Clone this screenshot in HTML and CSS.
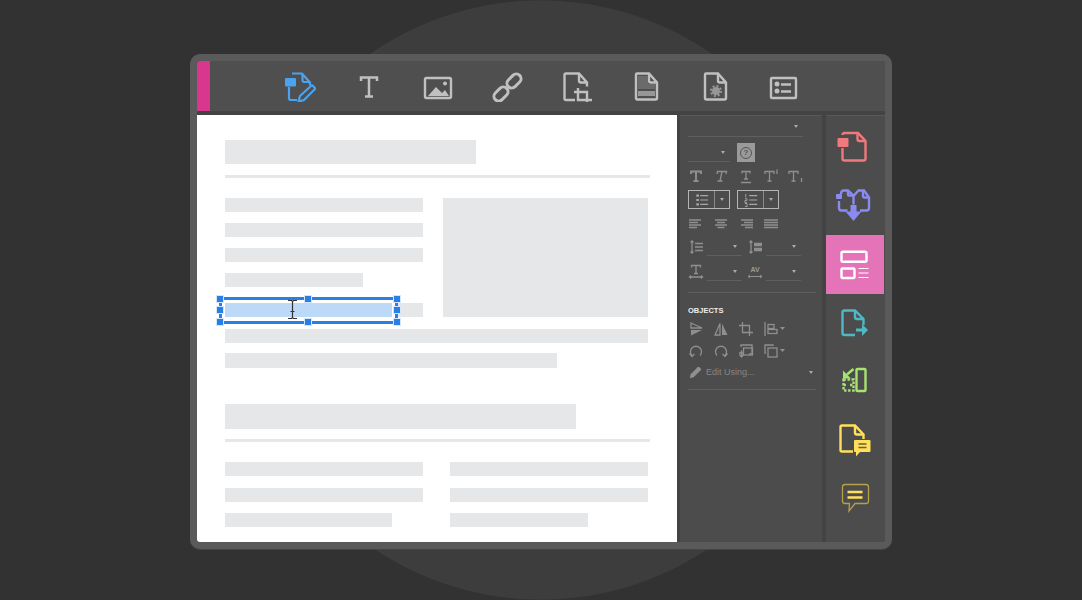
FILE: index.html
```html
<!DOCTYPE html>
<html lang="en">

<head>
    <meta charset="UTF-8">
    <title>Editor</title>
    <link rel="stylesheet" href="styles.css">
</head>

<body>
    <div class="window">
        <!-- top toolbar -->
        <div class="toolbar">
            <div class="accent"></div>
            <div class="tools">
                <svg class="tool tool-blue" viewBox="0 0 36 32">
                    <path d="M10 3.500h10l8 9v3M7 17v11q0 2 2 2h6"/>
                    <path d="M20.500 4v6q0 2 2 2h5" />
                    <rect class="solid" x="3" y="8" width="11" height="8.500" rx="1"/>
                    <path d="M16.500 31.500l1.500-5.500L29 16q1-1 2 0l1.500 1.500q1 1 0 2L22 30z"/>
                </svg>
                <svg class="tool" viewBox="0 0 36 32">
                    <path class="slab" d="M10 11V7.500h16V11M18 7.500V26M14 26.500h8"/>
                </svg>
                <svg class="tool" viewBox="0 0 36 32">
                    <rect x="5" y="8" width="26" height="20" rx="1.500"/>
                    <path class="solid" d="M8 26l8-9 6 6 3-3 4 6z"/>
                    <circle class="solid" cx="25" cy="13.500" r="2"/>
                </svg>
                <svg class="tool" viewBox="0 0 36 32">
                    <rect class="thick" x="-8" y="-4.750" width="16" height="9.500" rx="4.750" transform="translate(25 11) rotate(-45)"/>
                    <rect class="thick" x="-8" y="-4.750" width="16" height="9.500" rx="4.750" transform="translate(12 24) rotate(-45)"/>
                </svg>
                <svg class="tool" viewBox="0 0 36 32">
                    <path d="M17 30H8q-1.500 0-1.500-1.500V5q0-1.500 1.500-1.500h13l8 9v4M21 4v6.500q0 2 2 2h6"/>
                    <path d="M20 18v12h14M16 22h13v12"/>
                </svg>
                <svg class="tool" viewBox="0 0 36 32">
                    <path d="M10 3.500h12l8 9V28q0 1.500-1.500 1.500h-18Q9 29.500 9 28V5q0-1.500 1-1.500zM22 4v6.500q0 2 2 2h6"/>
                    <path class="dim" d="M11 6h10v8h7v5H11z"/>
                    <rect class="mid" x="11" y="21" width="17" height="5"/>
                </svg>
                <svg class="tool" viewBox="0 0 36 32">
                    <path d="M10 3.500h12l8 9V28q0 1.500-1.500 1.500h-18Q9 29.500 9 28V5q0-1.500 1-1.500zM22 4v6.500q0 2 2 2h6"/>
                    <circle class="mid" cx="20" cy="21" r="4"/>
                    <circle class="gear" cx="20" cy="21" r="5"/>
                </svg>
                <svg class="tool" viewBox="0 0 36 32">
                    <rect x="6" y="8" width="25" height="20" rx="1"/>
                    <circle class="solid" cx="12" cy="14" r="2.500"/>
                    <circle class="solid" cx="12" cy="21" r="2.500"/>
                    <path d="M16 14.500h10M16 21.500h10"/>
                </svg>
            </div>
        </div>

        <div class="workspace">
            <!-- page being edited -->
            <div class="doc">
                <div class="bar title title-a"></div>
                <div class="bar rule"></div>
                <div class="cols">
                    <div class="col col-left">
                        <div class="bar"></div>
                        <div class="bar"></div>
                        <div class="bar"></div>
                        <div class="bar short"></div>
                        <div class="bar selected">
                            <div class="highlight"></div>
                            <div class="frame">
                                <span class="handle h-tl"></span>
                                <span class="handle h-tm"></span>
                                <span class="handle h-tr"></span>
                                <span class="handle h-ml"></span>
                                <span class="handle h-mr"></span>
                                <span class="handle h-bl"></span>
                                <span class="handle h-bm"></span>
                                <span class="handle h-br"></span>
                            </div>
                            <svg class="ibeam" viewBox="0 0 9 19">
                                <path d="M0 .5h3.500l1 1 1-1H9M4.500 1.500v16M0 18.500h3.500l1-1 1 1H9M2.500 11.500h4"/>
                            </svg>
                        </div>
                    </div>
                    <div class="picture"></div>
                </div>
                <div class="bar wide line-a"></div>
                <div class="bar line-b"></div>
                <div class="bar title title-b"></div>
                <div class="bar rule"></div>
                <div class="cols cols-lower">
                    <div class="col">
                        <div class="bar"></div>
                        <div class="bar"></div>
                        <div class="bar short-a"></div>
                    </div>
                    <div class="col">
                        <div class="bar"></div>
                        <div class="bar"></div>
                        <div class="bar short"></div>
                    </div>
                </div>
            </div>

            <!-- properties panel -->
            <div class="panel">
                <div class="select select-full"><i class="caret"></i></div>
                <div class="row row-font">
                    <div class="select select-size"><i class="caret"></i></div>
                    <div class="help"><span>?</span></div>
                </div>
                <div class="row icons row-t">
                    <svg class="pi pi-bold" viewBox="0 0 16 16"><path d="M3 6V3.500h10V6M8 3.500V13M5.500 13h5"/></svg>
                    <svg class="pi" viewBox="0 0 16 16"><path d="M4 6l.5-2.500h9L13 6M9 3.500L7 13M4.500 13h5"/></svg>
                    <svg class="pi" viewBox="0 0 16 16"><path d="M4 5.500v-2h8v2M8 3.500V11M6 11h4M3 14.500h10"/></svg>
                    <svg class="pi" viewBox="0 0 16 16"><path d="M2 6V3.500h9V6M6.500 3.500V13M4.500 13h4M14 1.500V6"/></svg>
                    <svg class="pi" viewBox="0 0 16 16"><path d="M1 6V3.500h9V6M5.500 3.500V13M3.500 13h4M13.500 10v4"/></svg>
                </div>
                <div class="row row-lists">
                    <div class="split">
                        <svg class="pi" viewBox="0 0 16 16">
                            <path d="M6 3h9M6 8h9M6 13h9"/>
                            <path class="dots" d="M1.500 3h3M1.500 8h3M1.500 13h3"/>
                        </svg>
                        <div class="split-arrow"><i class="caret"></i></div>
                    </div>
                    <div class="split">
                        <svg class="pi" viewBox="0 0 16 16">
                            <path d="M6 3h9M6 8h9M6 13h9"/>
                            <path class="thin" d="M2 1v4M1 6.500h2.500v2H1V11h2.500M1 12h2.500v3.500H1"/>
                        </svg>
                        <div class="split-arrow"><i class="caret"></i></div>
                    </div>
                </div>
                <div class="row icons row-align">
                    <svg class="pi" viewBox="0 0 16 16"><path d="M1 4h12M1 6.500h9M1 9h12M1 11.500h8"/></svg>
                    <svg class="pi" viewBox="0 0 16 16"><path d="M2 4h12M4 6.500h8M2 9h12M4.500 11.500h7"/></svg>
                    <svg class="pi" viewBox="0 0 16 16"><path d="M3 4h12M6 6.500h9M3 9h12M7 11.500h8"/></svg>
                    <svg class="pi" viewBox="0 0 16 16"><path d="M1 4h14M1 6.500h14M1 9h14M1 11.500h14"/></svg>
                </div>
                <div class="row row-metric">
                    <svg class="pi" viewBox="0 0 16 16"><path d="M4 2v12M2.500 3.500L4 2l1.500 1.500M2.500 12.500L4 14l1.500-1.500M7 4.500h8M7 8h8M7 11.500h8"/></svg>
                    <div class="select select-small"><i class="caret"></i></div>
                    <svg class="pi pi-second" viewBox="0 0 16 16">
                        <path d="M4 2v12M2.500 3.500L4 2l1.500 1.500M2.500 12.500L4 14l1.500-1.500"/>
                        <path class="thick-bar" d="M7 5.500h8M7 10.500h8"/>
                    </svg>
                    <div class="select select-small"><i class="caret"></i></div>
                </div>
                <div class="row row-metric row-metric-b">
                    <svg class="pi" viewBox="0 0 16 16"><path d="M3.500 3.500V1.500h9v2M8 1.500v8M6 9.500h4M1.500 13h13M3 11.500L1.500 13 3 14.500M13 11.500l1.500 1.500-1.500 1.500"/></svg>
                    <div class="select select-small"><i class="caret"></i></div>
                    <div class="av pi-second">
                        <span>AV</span>
                        <svg class="av-arrow" viewBox="0 0 16 5"><path d="M1 2.500h14M3 1L1 2.500 3 4M13 1l2 1.500L13 4"/></svg>
                    </div>
                    <div class="select select-small"><i class="caret"></i></div>
                </div>
                <div class="divider divider-a"></div>
                <div class="heading">OBJECTS</div>
                <div class="row icons row-obj">
                    <svg class="pi" viewBox="0 0 16 16"><path d="M3 2l11 5H3z"/><path class="fill" d="M3 9h11L3 14.500z"/></svg>
                    <svg class="pi" viewBox="0 0 16 16"><path d="M7 2.500L2 14h5z"/><path class="fill" d="M9 2.500L14.500 14H9z"/></svg>
                    <svg class="pi" viewBox="0 0 16 16"><path d="M4.500 1v10.500H15M1 4.500h10.500V15"/></svg>
                    <svg class="pi" viewBox="0 0 16 16">
                        <path d="M2 1v14"/><rect x="5" y="3.500" width="6" height="4"/><rect x="5" y="8.500" width="9" height="4"/>
                        <path class="fill" d="M17 6h5l-2.500 3z"/>
                    </svg>
                </div>
                <div class="row icons row-obj row-obj-b">
                    <svg class="pi" viewBox="0 0 16 16"><path d="M4 12.500A5.500 5.500 0 1 1 12 12.500M1.500 10.500L4 13.500l2.500-2.500"/></svg>
                    <svg class="pi" viewBox="0 0 16 16"><path d="M12 12.500A5.500 5.500 0 1 0 4 12.500M14.500 10.500L12 13.500l-2.500-2.500"/></svg>
                    <svg class="pi" viewBox="0 0 16 16">
                        <path d="M3 4V2h11v9h-3"/><rect x="5.500" y="5" width="9" height="7"/>
                        <path d="M1 10h5M3.500 7.500V13M1.500 11.500l2 2.500 2-2.500"/>
                    </svg>
                    <svg class="pi" viewBox="0 0 16 16">
                        <path d="M10 3V2H2v8h1"/><rect x="5" y="5" width="9" height="9"/>
                        <path class="fill" d="M17 6h5l-2.500 3z"/>
                    </svg>
                </div>
                <div class="row row-edit">
                    <svg class="pi" viewBox="0 0 16 16"><path class="fill" d="M2 15l1-4.500L11 2.500q1-1 2 0l1.500 1.500q1 1 0 2L6.500 14z"/></svg>
                    <span class="edit-label">Edit Using...</span>
                    <i class="caret"></i>
                </div>
                <div class="divider divider-b"></div>
            </div>

            <!-- right side rail -->
            <div class="rail">
                <div class="rail-item tall">
                    <svg class="ri ri-red" viewBox="0 0 36 36">
                        <path d="M7.500 6q0-2 2-2H23l7.500 8v17.500q0 2-2 2h-19q-2 0-2-2V19"/>
                        <path d="M22.500 4.500V10q0 2 2 2h6"/>
                        <rect class="solid" x="2.500" y="9" width="11" height="9" rx="1"/>
                    </svg>
                </div>
                <div class="rail-item tall">
                    <svg class="ri ri-violet" viewBox="0 0 36 36">
                        <path d="M4 13v7q0 2.500 2.500 2.500h6M6 6q0-3.500 3-3.500h4l5.500 5v9M18.500 8l5-5.500H29l5 7V20q0 2.500-2.500 2.500H25"/>
                        <path d="M13 3v3.500q0 1 1 1h4.500M28 3v5q0 1.500 1.500 1.500H34"/>
                        <rect class="solid" x="1" y="6" width="6" height="5" rx="1"/>
                        <path class="solid" d="M15.500 17h6v6.500h5L18.500 33l-8-9.500h5z"/>
                    </svg>
                </div>
                <div class="rail-item active">
                    <svg class="ri ri-white" viewBox="0 0 36 36">
                        <rect x="6.500" y="4.700" width="25" height="10" rx="1.500"/>
                        <rect x="6.500" y="21.500" width="13" height="9.500" rx="1"/>
                        <path class="hair" d="M23.500 21.500h10M23.500 26h10M23.500 30.500h10"/>
                    </svg>
                </div>
                <div class="rail-item">
                    <svg class="ri ri-teal" viewBox="0 0 36 36">
                        <path d="M20 30H9.500q-2 0-2-2V7.500q0-2 2-2H20l8.500 8.500v6"/>
                        <path d="M20 6v6q0 2 2 2h6.500"/>
                        <path class="solid" d="M21 23.500h6V19l6 6-6 6v-4.500h-6z"/>
                    </svg>
                </div>
                <div class="rail-item">
                    <svg class="ri ri-green" viewBox="0 0 36 36">
                        <rect x="21.500" y="6" width="9" height="22" rx="1"/>
                        <rect class="dash" x="8.500" y="16.500" width="10" height="11"/>
                        <path class="dash" d="M8.500 22h3M15 22h3.500"/>
                        <path class="solid" d="M8 7.500v8h8z"/>
                        <path d="M12 11.500L18.500 6"/>
                    </svg>
                </div>
                <div class="rail-item">
                    <svg class="ri ri-yellow" viewBox="0 0 36 36">
                        <path d="M18 30.500H7q-1.500 0-1.500-1.500V6q0-1.500 1.500-1.500h13l8.500 9V18"/>
                        <path d="M20 5v6.500q0 2 2 2h6.500"/>
                        <path class="solid" d="M20 19h14.500q1 0 1 1v10q0 1-1 1H25l-4 4.500V31h-1q-1 0-1-1V20q0-1 1-1z"/>
                        <path class="ink" d="M23.500 23h8M23.500 26.500h8"/>
                    </svg>
                </div>
                <div class="rail-item">
                    <svg class="ri ri-note" viewBox="0 0 36 36">
                        <path class="outline" d="M10 5.500h21q2.500 0 2.500 2.500v14q0 2.500-2.500 2.500H20l-6 7.500.5-7.500H10q-2.500 0-2.500-2.500V8q0-2.500 2.500-2.500z"/>
                        <path d="M12.500 13h15M12.500 18.500h15"/>
                    </svg>
                </div>
            </div>
        </div>
    </div>
</body>

</html>
```

FILE: styles.css
```css
html,
body {
    margin: 0;
    padding: 0;
}

body {
    height: 600px;
    overflow: hidden;
    padding-top: 54px;
    box-sizing: border-box;
    background: radial-gradient(circle 300px at 541px 300px, #3d3d3d 99.7%, #323232 100%);
    font-family: "Liberation Sans", Arial, sans-serif;
}

.window {
    box-sizing: border-box;
    width: 702px;
    height: 495px;
    margin: 0 auto;
    border: 7px solid #5a5a5a;
    border-radius: 10px;
    background: #434343;
    box-shadow: 0 1px 0 #454545;
    overflow: hidden;
}

/* toolbar */
.toolbar {
    display: flex;
    height: 50px;
    background: #4f4f4f;
}

.accent {
    width: 13px;
    background: #d9368f;
}

.tools {
    flex: 1;
    display: flex;
    justify-content: center;
    align-items: center;
    gap: 33px;
    padding-right: 12px;
}

.tool {
    width: 36px;
    height: 32px;
    fill: none;
    stroke: #c0c0c0;
    stroke-width: 2.400;
}

.tool .thick {
    stroke-width: 3;
}

.tool .slab {
    stroke-width: 2.500;
}

.tool .solid {
    fill: #c0c0c0;
    stroke: none;
}

.tool .dim {
    fill: #6b6b6b;
    stroke: none;
}

.tool .mid {
    fill: #979797;
    stroke: none;
}

.tool .gear {
    stroke: #979797;
    stroke-width: 2;
    stroke-dasharray: 2 1.900;
}

.tool-blue {
    stroke: #4aa3f0;
    stroke-width: 2.200;
}

.tool-blue .solid {
    fill: #4aa3f0;
}

.workspace {
    display: flex;
    gap: 3px;
    height: 427px;
    margin-top: 4px;
}

/* document */
.doc {
    box-sizing: border-box;
    width: 480px;
    padding: 25px 0 0 28px;
    background: #fff;
}

.bar {
    height: 14px;
    background: #e6e7e8;
}

.title {
    height: 24px;
    margin-bottom: 11px;
}

.title-a {
    width: 251px;
}

.title-b {
    width: 351px;
    height: 25px;
    margin-top: 36px;
    margin-bottom: 10px;
}

.rule {
    width: 425px;
    height: 3px;
    margin-bottom: 20px;
}

.cols {
    display: flex;
    gap: 20px;
}

.cols-lower {
    gap: 27px;
}

.col {
    display: flex;
    flex-direction: column;
    gap: 11.500px;
    width: 198px;
}

.col-left {
    gap: 11px;
}

.short {
    width: 138px;
}

.short-a {
    width: 167px;
}

.selected {
    position: relative;
    margin-top: 5px;
}

.picture {
    width: 205px;
    height: 119px;
    background: #e6e7e8;
}

.wide {
    width: 423px;
}

.line-a {
    margin-top: 12px;
}

.line-b {
    width: 332px;
    height: 15px;
    margin-top: 10px;
}

/* text selection */
.highlight {
    height: 14px;
    width: 169px;
    background: #bcd9f7;
}

.frame {
    position: absolute;
    top: -6px;
    left: -6px;
    box-sizing: border-box;
    width: 179px;
    height: 27px;
    border: 3.500px solid #2a7fe6;
    border-left-width: 3px;
    border-right-width: 3px;
    box-shadow: inset 0 0 0 3px #fff;
}

.handle {
    position: absolute;
    width: 6px;
    height: 6px;
    background: #2a7fe6;
    box-shadow: 0 0 0 1px #d5e6fa;
}

.h-tl,
.h-tr,
.h-tm {
    top: -4px;
}

.h-bl,
.h-br,
.h-bm {
    bottom: -4px;
}

.h-ml,
.h-mr {
    top: 7px;
}

.h-tl,
.h-ml,
.h-bl {
    left: -5px;
}

.h-tr,
.h-mr,
.h-br {
    right: -5px;
}

.h-tm,
.h-bm {
    left: 83px;
}

.ibeam {
    position: absolute;
    top: -3px;
    left: 63px;
    width: 9px;
    height: 19px;
    fill: none;
    stroke: #333;
    stroke-width: 1.200;
}

/* properties panel */
.panel {
    box-sizing: border-box;
    width: 142px;
    padding: 0 6px 0 8px;
    background: #4c4c4c;
    border-top: 1px solid #585858;
}

.row {
    display: flex;
    align-items: center;
}

.icons {
    gap: 9px;
}

.select {
    box-sizing: border-box;
    display: flex;
    justify-content: flex-end;
    align-items: center;
    border-bottom: 1px solid #5f5f5f;
    padding-right: 5px;
}

.select-full {
    width: 115px;
    height: 21px;
}

.select-size {
    width: 42px;
    height: 19px;
}

.select-small {
    width: 35px;
    height: 18px;
    margin-left: 3px;
}

.caret {
    display: block;
    width: 0;
    height: 0;
    border-style: solid;
    border-width: 3px 2.500px 0;
    border-color: #aaa transparent transparent;
}

.row-font {
    margin-top: 6px;
    gap: 7px;
}

.help {
    box-sizing: border-box;
    display: flex;
    align-items: center;
    justify-content: center;
    width: 18px;
    height: 19px;
    background: #9a9a9a;
}

.help span {
    box-sizing: border-box;
    width: 12px;
    height: 12px;
    border: 1px solid #555;
    border-radius: 50%;
    color: #555;
    font-size: 8px;
    font-weight: bold;
    line-height: 10px;
    text-align: center;
}

.pi {
    flex: none;
    width: 16px;
    height: 16px;
    overflow: visible;
    fill: none;
    stroke: #8f8f8f;
    stroke-width: 1.300;
}

.pi-bold {
    stroke-width: 1.900;
}

.pi .fill {
    fill: #8f8f8f;
    stroke: none;
}

.pi .dots {
    stroke-width: 2.400;
    stroke-dasharray: 2 0;
}

.pi .thin {
    stroke-width: 1;
}

.pi .thick-bar {
    stroke-width: 3.500;
}

.row-t {
    margin-top: 6px;
}

.row-lists {
    margin-top: 6px;
    gap: 7px;
}

.split {
    box-sizing: border-box;
    display: flex;
    align-items: center;
    width: 42px;
    height: 19px;
    border: 1px solid #b5b5b5;
    padding-left: 6px;
}

.split .pi {
    width: 14px;
    height: 14px;
    margin-right: 5px;
    stroke: #a8a8a8;
}

.split-arrow {
    flex: 1;
    display: flex;
    align-self: stretch;
    align-items: center;
    justify-content: center;
    border-left: 1px solid #8a8a8a;
}

.row-align {
    margin-top: 7px;
}

.row-metric {
    margin-top: 6px;
}

.row-metric-b {
    margin-top: 7px;
}

.pi-second {
    margin-left: 5px;
}

.av {
    flex: none;
    display: flex;
    flex-direction: column;
    align-items: center;
    width: 16px;
    color: #9a9a9a;
    font-size: 7px;
    font-weight: bold;
    line-height: 8px;
}

.av-arrow {
    width: 16px;
    height: 5px;
    fill: none;
    stroke: #8f8f8f;
    stroke-width: 1;
}

.divider {
    height: 1px;
    background: #5f5f5f;
}

.divider-a {
    width: 128px;
    margin-top: 11px;
}

.divider-b {
    width: 128px;
    margin-top: 10px;
}

.heading {
    margin-top: 13px;
    color: #ededed;
    font-size: 7.500px;
    font-weight: bold;
    line-height: 9px;
}

.row-obj {
    margin-top: 6px;
}

.row-edit {
    margin-top: 6px;
    width: 125px;
}

.row-edit .pi {
    width: 14px;
    height: 14px;
}

.edit-label {
    flex: 1;
    margin-left: 4px;
    color: #868686;
    font-size: 9px;
    line-height: 14px;
}

/* right rail */
.rail {
    box-sizing: border-box;
    width: 59px;
    margin-left: 1px;
    padding: 1px 1px 0 0;
    background: #4c4c4c;
    border-top: 1px solid #585858;
}

.rail-item {
    display: flex;
    align-items: center;
    justify-content: center;
    height: 58px;
    padding-right: 5px;
}

.rail-item.tall,
.rail-item.active {
    height: 59px;
}

.active {
    background: #e573b7;
}

.ri {
    width: 36px;
    height: 36px;
    fill: none;
    stroke-width: 2.400;
}

.ri .solid {
    stroke: none;
}

.ri-red {
    stroke: #f0797d;
}

.ri-red .solid {
    fill: #f0797d;
}

.ri-violet {
    stroke: #8a8af0;
}

.ri-violet .solid {
    fill: #8a8af0;
}

.ri-white {
    stroke: #fff;
}

.ri-white .hair {
    stroke-width: 1;
}

.ri-teal {
    stroke: #4fb8c4;
}

.ri-teal .solid {
    fill: #4fb8c4;
}

.ri-green {
    stroke: #a6e36f;
}

.ri-green .solid {
    fill: #a6e36f;
}

.ri-green .dash {
    stroke-dasharray: 2.400 1.600;
}

.ri-yellow {
    stroke: #ffdf5c;
}

.ri-yellow .solid {
    fill: #ffdf5c;
}

.ri-yellow .ink {
    stroke: #6b5f2a;
    stroke-width: 1.500;
}

.ri-note {
    stroke: #ffdf5c;
}

.ri-note .outline {
    stroke: #b89f4a;
    stroke-width: 1.300;
}
```
